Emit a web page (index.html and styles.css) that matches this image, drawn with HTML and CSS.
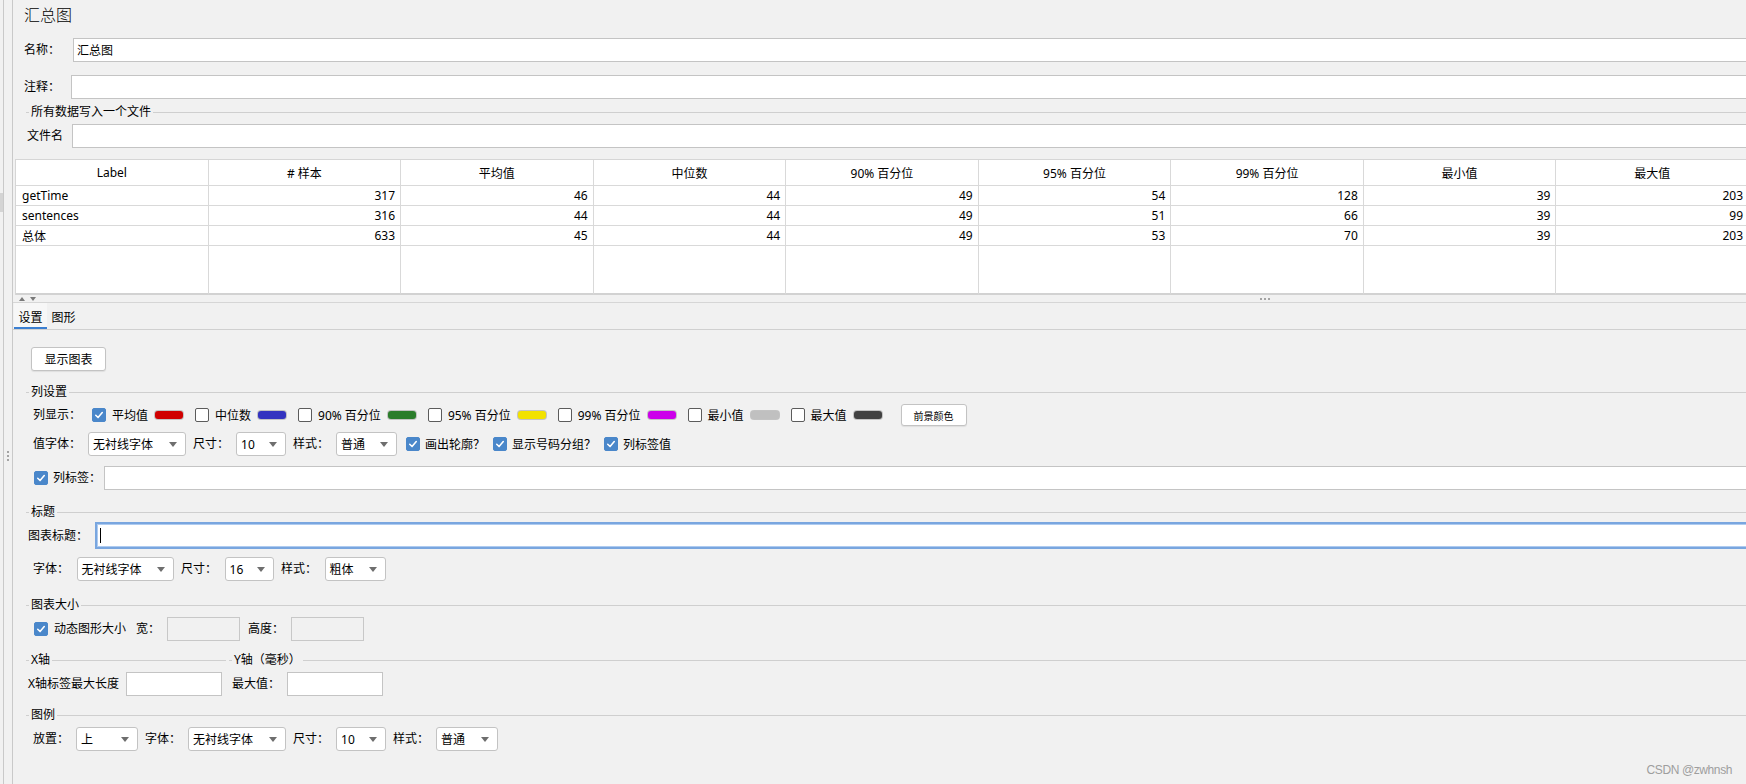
FILE: index.html
```html
<!DOCTYPE html>
<html lang="zh-CN">
<head>
<meta charset="utf-8">
<title>汇总图</title>
<link rel="stylesheet" href="styles.css">
</head>
<body>
<div class="app">
  <div class="gutter">
    <div class="strip"><div class="strip-knob"></div></div>
    <div class="handle"><span></span><span></span><span></span></div>
  </div>
  <div class="main">
    <div class="top">
      <div class="title">汇总图</div>
      <div class="frow r-name"><span class="lbl w-name">名称：</span><div class="input">汇总图</div></div>
      <div class="frow r-comment"><span class="lbl w-comment">注释：</span><div class="input"></div></div>
      <div class="legend lg-file"><span class="lg-lead"></span><span class="lg-text">所有数据写入一个文件</span><span class="lg-line"></span></div>
      <div class="frow r-file"><span class="lbl w-file">文件名</span><div class="input"></div></div>
    </div>

    <table class="grid">
      <colgroup>
        <col><col><col><col><col><col><col><col><col>
      </colgroup>
      <thead>
        <tr class="h"><th>Label</th><th># 样本</th><th>平均值</th><th>中位数</th><th>90% 百分位</th><th>95% 百分位</th><th>99% 百分位</th><th>最小值</th><th>最大值</th></tr>
      </thead>
      <tbody>
        <tr class="d"><td class="l">getTime</td><td>317</td><td>46</td><td>44</td><td>49</td><td>54</td><td>128</td><td>39</td><td>203</td></tr>
        <tr class="d"><td class="l">sentences</td><td>316</td><td>44</td><td>44</td><td>49</td><td>51</td><td>66</td><td>39</td><td>99</td></tr>
        <tr class="d"><td class="l">总体</td><td>633</td><td>45</td><td>44</td><td>49</td><td>53</td><td>70</td><td>39</td><td>203</td></tr>
        <tr class="f"><td></td><td></td><td></td><td></td><td></td><td></td><td></td><td></td><td></td></tr>
      </tbody>
    </table>

    <div class="splitter">
      <div class="arrows"><i class="up"></i><i class="down"></i></div>
      <div class="dots"><span></span><span></span><span></span></div>
    </div>

    <div class="tabs">
      <div class="tab sel">设置</div>
      <div class="tab">图形</div>
    </div>

    <div class="settings">
      <div class="btn show-btn">显示图表</div>

      <div class="legend lg-cols"><span class="lg-lead"></span><span class="lg-text">列设置</span><span class="lg-line"></span></div>

      <div class="frow r-colshow">
        <span class="lbl colshow-lbl">列显示：</span>
        <div class="series"><span class="cb on"><svg viewBox="0 0 14 14"><path d="M3.2 7.3 L5.9 10 L10.8 4.2" /></svg></span><span class="st">平均值</span><span class="sw" style="background:#d00000"></span></div>
        <div class="series"><span class="cb"></span><span class="st">中位数</span><span class="sw" style="background:#3434c0"></span></div>
        <div class="series"><span class="cb"></span><span class="st">90% 百分位</span><span class="sw" style="background:#2b7d2b"></span></div>
        <div class="series"><span class="cb"></span><span class="st">95% 百分位</span><span class="sw" style="background:#f2e200"></span></div>
        <div class="series"><span class="cb"></span><span class="st">99% 百分位</span><span class="sw" style="background:#cc00ea"></span></div>
        <div class="series"><span class="cb"></span><span class="st">最小值</span><span class="sw" style="background:#c0c0c0"></span></div>
        <div class="series"><span class="cb"></span><span class="st">最大值</span><span class="sw" style="background:#414141"></span></div>
        <div class="btn fg-btn">前景颜色</div>
      </div>

      <div class="frow r-valfont">
        <span class="lbl">值字体：</span>
        <div class="combo c98"><span class="v">无衬线字体</span><i class="arr"></i></div>
        <span class="lbl">尺寸：</span>
        <div class="combo c50"><span class="v">10</span><i class="arr"></i></div>
        <span class="lbl">样式：</span>
        <div class="combo c61"><span class="v">普通</span><i class="arr"></i></div>
        <div class="chk"><span class="cb on"><svg viewBox="0 0 14 14"><path d="M3.2 7.3 L5.9 10 L10.8 4.2" /></svg></span><span>画出轮廓？</span></div>
        <div class="chk"><span class="cb on"><svg viewBox="0 0 14 14"><path d="M3.2 7.3 L5.9 10 L10.8 4.2" /></svg></span><span>显示号码分组？</span></div>
        <div class="chk"><span class="cb on"><svg viewBox="0 0 14 14"><path d="M3.2 7.3 L5.9 10 L10.8 4.2" /></svg></span><span>列标签值</span></div>
      </div>

      <div class="frow r-collabel">
        <span class="cb on"><svg viewBox="0 0 14 14"><path d="M3.2 7.3 L5.9 10 L10.8 4.2" /></svg></span>
        <span class="lbl collabel-lbl">列标签：</span>
        <div class="input"></div>
      </div>

      <div class="legend lg-title"><span class="lg-lead"></span><span class="lg-text">标题</span><span class="lg-line"></span></div>

      <div class="frow r-charttitle">
        <span class="lbl">图表标题：</span>
        <div class="input focus"><span class="caret"></span></div>
      </div>

      <div class="frow r-font">
        <span class="lbl">字体：</span>
        <div class="combo c97"><span class="v">无衬线字体</span><i class="arr"></i></div>
        <span class="lbl">尺寸：</span>
        <div class="combo c49"><span class="v">16</span><i class="arr"></i></div>
        <span class="lbl">样式：</span>
        <div class="combo c61"><span class="v">粗体</span><i class="arr"></i></div>
      </div>

      <div class="legend lg-size"><span class="lg-lead"></span><span class="lg-text">图表大小</span><span class="lg-line"></span></div>

      <div class="frow r-size">
        <span class="cb on"><svg viewBox="0 0 14 14"><path d="M3.2 7.3 L5.9 10 L10.8 4.2" /></svg></span>
        <span class="lbl dyn-lbl">动态图形大小</span>
        <span class="lbl">宽：</span>
        <div class="box disabled"></div>
        <span class="lbl h-lbl">高度：</span>
        <div class="box disabled"></div>
      </div>

      <div class="axes">
        <div class="axis xaxis">
          <div class="legend"><span class="lg-lead"></span><span class="lg-text">X轴</span><span class="lg-line"></span></div>
          <div class="frow r-axis r-x">
            <span class="lbl">X轴标签最大长度</span>
            <div class="box"></div>
          </div>
        </div>
        <div class="axis yaxis">
          <div class="legend"><span class="lg-lead"></span><span class="lg-text">Y轴（毫秒）</span><span class="lg-line"></span></div>
          <div class="frow r-axis r-y">
            <span class="lbl">最大值：</span>
            <div class="box"></div>
          </div>
        </div>
      </div>

      <div class="legend lg-legend"><span class="lg-lead"></span><span class="lg-text">图例</span><span class="lg-line"></span></div>

      <div class="frow r-place">
        <span class="lbl">放置：</span>
        <div class="combo c62"><span class="v">上</span><i class="arr"></i></div>
        <span class="lbl">字体：</span>
        <div class="combo c98"><span class="v">无衬线字体</span><i class="arr"></i></div>
        <span class="lbl">尺寸：</span>
        <div class="combo c50"><span class="v">10</span><i class="arr"></i></div>
        <span class="lbl">样式：</span>
        <div class="combo c62"><span class="v">普通</span><i class="arr"></i></div>
      </div>
    </div>
  </div>
</div>
<div class="watermark">CSDN @zwhnsh</div>
</body>
</html>
```

FILE: styles.css
```css
* { box-sizing: border-box; }
html, body { margin: 0; padding: 0; }
body {
  width: 1746px;
  height: 784px;
  overflow: hidden;
  position: relative;
  background: #f1f1f1;
  color: #000;
  font-family: "Noto Sans", "Noto Sans CJK SC", sans-serif;
  font-size: 12px;
}
.app { display: flex; height: 784px; }

/* left gutter */
.gutter { width: 12px; flex: none; display: flex; }
.strip { width: 4px; border-right: 1px solid #c9c9c9; padding-top: 193px; }
.strip-knob { height: 19px; background: #d4d4d4; }
.handle { width: 8px; padding-top: 451px; display: flex; flex-direction: column; align-items: center; gap: 2px; }
.handle span { width: 2px; height: 2px; background: #8a8a8a; border-radius: 1px; }

.main {
  flex: 1;
  min-width: 0;
  border-left: 1px solid #c9c9c9;
  overflow: hidden;
  display: flex;
  flex-direction: column;
}

/* generic */
.frow { display: flex; align-items: center; height: 24px; }
.lbl { flex: none; white-space: nowrap; line-height: 16px; }
.input {
  flex: 1;
  height: 100%;
  background: #fff;
  border: 1px solid #c4c4c4;
  margin-right: -6px;
  padding: 0 3px;
  display: flex;
  align-items: center;
}
.box { flex: none; height: 24px; width: 96px; background: #fff; border: 1px solid #c4c4c4; }
.box.disabled { width: 73px; background: #f1f1f1; border-color: #c8c8c8; }

.legend { display: flex; align-items: center; height: 14px; }
.lg-lead { width: 3px; border-top: 1px solid #cfcfcf; margin-right: 2px; flex: none; }
.lg-text { line-height: 14px; white-space: nowrap; flex: none; }
.lg-line { flex: 1; border-top: 1px solid #cfcfcf; margin-left: 2px; }

/* top area */
.top { padding-left: 11px; flex: none; }
.title { height: 30px; line-height: 30px; font-size: 16px; font-weight: 300; }
.r-name { margin-top: 8px; }
.w-name { width: 49px; }
.r-comment { margin-top: 13px; }
.w-comment { width: 47px; }
.lg-file { margin-top: 6px; margin-left: 2px; }
.r-file { margin-top: 5px; padding-left: 3px; }
.w-file { width: 45px; }

/* table */
.grid {
  flex: none;
  margin-top: 11px;
  margin-left: 2px;
  width: 1734px;
  table-layout: fixed;
  border-collapse: separate;
  border-spacing: 0;
  background: #fff;
  border-top: 1px solid #d6d6d6;
  border-left: 1px solid #d6d6d6;
}
.grid col { width: 192.5px; }
.grid th, .grid td {
  padding: 0 5px 0 0;
  border-right: 1px solid #d9d9d9;
  border-bottom: 1px solid #d9d9d9;
  white-space: nowrap;
  overflow: hidden;
}
.grid th { font-weight: normal; text-align: center; padding: 0; }
.grid td { text-align: right; }
.grid td.l { text-align: left; padding-left: 6px; }
.grid tr.h { height: 26px; }
.grid tr.d { height: 20px; }
.grid tr.f { height: 49px; }
.grid tr.f td { border-bottom: 2px solid #d2d2d2; }

/* splitter */
.splitter {
  flex: none;
  height: 8px;
  border-bottom: 1px solid #d6d6d6;
  display: flex;
  align-items: center;
}
.arrows { display: flex; gap: 5px; margin-left: 6px; }
.arrows i { width: 0; height: 0; border-left: 3.5px solid transparent; border-right: 3.5px solid transparent; }
.arrows .up { border-bottom: 4px solid #7a7a7a; }
.arrows .down { border-top: 4px solid #7a7a7a; }
.dots { display: flex; gap: 2px; margin-left: 1224px; }
.dots span { width: 2px; height: 2px; background: #8a8a8a; border-radius: 1px; }

/* tabs */
.tabs { flex: none; display: flex; height: 27px; border-bottom: 1px solid #d0d0d0; padding-left: 1px; }
.tab { height: 26px; padding: 5px 4.5px 0; line-height: 20px; font-size: 12px; }
.tab.sel { border-bottom: 2px solid #3b7fd1; background: #f7f7f7; }

/* settings */
.settings { flex: 1; padding-left: 13px; }
.btn {
  flex: none;
  background: #fff;
  border: 1px solid #c3c3c3;
  border-radius: 3px;
  box-shadow: 0 1px 1px rgba(0,0,0,0.08);
  display: flex;
  align-items: center;
  justify-content: center;
}
.show-btn { margin-top: 17px; margin-left: 5px; width: 75px; height: 24px; }
.fg-btn { width: 66px; height: 22px; font-size: 10px; margin-left: 7px; }

.lg-cols { margin-top: 14px; }

.cb {
  flex: none;
  width: 14px;
  height: 14px;
  border: 1px solid #5c5c5c;
  border-radius: 2px;
  background: #fff;
  display: inline-flex;
}
.cb.on { background: #4a87ca; border-color: #4a87ca; }
.cb svg { width: 12px; height: 12px; }
.cb svg path { fill: none; stroke: #fff; stroke-width: 1.8; stroke-linecap: round; stroke-linejoin: round; }

.r-colshow { margin-top: 4px; padding-left: 7px; }
.colshow-lbl { margin-right: 11px; }
.series { display: flex; align-items: center; flex: none; }
.series .st { margin-left: 6px; white-space: nowrap; }
.series .sw {
  width: 28px;
  height: 8px;
  border-radius: 3px;
  margin-left: 7px;
  margin-right: 12px;
  box-shadow: 0 0 0 1px rgba(140,140,140,0.45);
}

.combo {
  flex: none;
  height: 24px;
  background: #fff;
  border: 1px solid #c3c3c3;
  border-radius: 3px;
  display: flex;
  align-items: center;
  padding-left: 4px;
}
.combo .v { flex: 1; white-space: nowrap; }
.combo .arr {
  width: 0; height: 0;
  border-left: 4px solid transparent;
  border-right: 4px solid transparent;
  border-top: 5px solid #6e6e6e;
  margin-right: 8px;
}
.c98 { width: 98px; }
.c97 { width: 97px; }
.c62 { width: 62px; }
.c61 { width: 61px; }
.c50 { width: 50px; }
.c49 { width: 49px; }

.r-valfont { margin-top: 5px; padding-left: 7px; gap: 7px; }
.r-valfont .c61 { margin-right: 1px; }
.chk { display: flex; align-items: center; gap: 5px; flex: none; margin-left: 1px; white-space: nowrap; }

.r-collabel { margin-top: 10px; padding-left: 8px; }
.collabel-lbl { margin-left: 5px; width: 51px; }

.lg-title { margin-top: 15px; }
.r-charttitle { margin-top: 3px; height: 27px; padding-left: 2px; gap: 7px; }
.input.focus { border: 2px solid #79a6df; box-shadow: inset 0 0 0 1px #aecbf0; padding-left: 3px; }
.caret { width: 1px; height: 15px; background: #000; }

.r-font { margin-top: 8px; padding-left: 7px; gap: 7.5px; }

.lg-size { margin-top: 17px; }
.r-size { margin-top: 5px; padding-left: 8px; }
.dyn-lbl { margin-left: 6px; margin-right: 10px; }
.r-size .box { margin-left: 7px; }
.h-lbl { margin-left: 8px; }

.axes { display: flex; margin-top: 12px; }
.xaxis { width: 200px; flex: none; margin-right: 3px; }
.yaxis { flex: 1; }
.r-axis { margin-top: 5px; gap: 7px; }
.r-x { padding-left: 2px; }
.r-y { padding-left: 3px; }

.lg-legend { margin-top: 12px; }
.r-place { margin-top: 5px; padding-left: 7px; gap: 7px; }

.watermark {
  position: absolute;
  right: 14px;
  bottom: 7px;
  color: #9e9e9e;
  font-family: "Liberation Sans", Arial, sans-serif;
  font-size: 12px;
  letter-spacing: -0.4px;
}
```
